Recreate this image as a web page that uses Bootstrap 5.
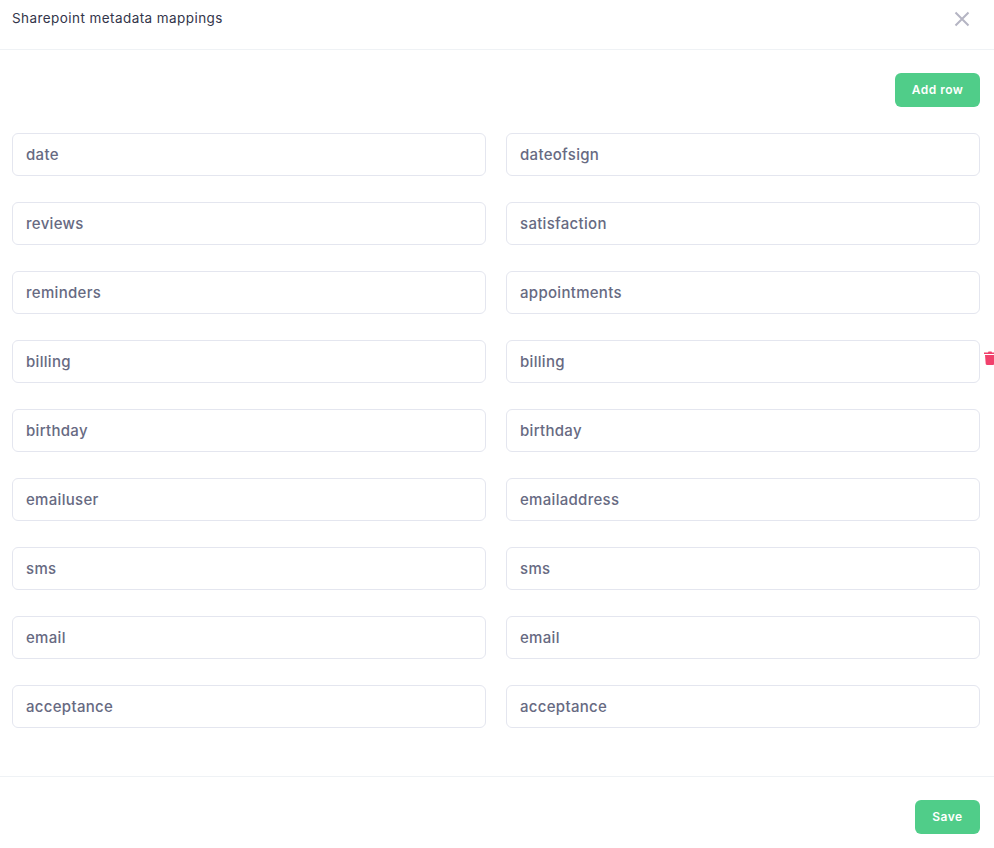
<!DOCTYPE html>
<html>
  <head>
    <link href="https://cdn.jsdelivr.net/npm/bootstrap@5.3.3/dist/css/bootstrap.min.css" rel="stylesheet">
    <script src="https://cdn.jsdelivr.net/npm/bootstrap@5.3.3/dist/js/bootstrap.bundle.min.js"></script>
    <style>
      html, body { height: 100%; overflow: hidden; }
      body { font-family: "Inter", "Liberation Sans", sans-serif; background: #fff; }
      .dlg-head { height: 50px; padding: 0 12px; border-bottom: 1px solid #eff2f5; }
      .dlg-title { font-size: 13.5px; letter-spacing: .43px; line-height: 18px; color: #33354a; margin: 9px 0 0; font-weight: 400; }
      .dlg-close { width: 16px; height: 16px; margin: 11px 12px 0 0; color: #b5b5c3; }
      .dlg-body { padding: 23px 14px 0 12px; }
      .map-btn { background: #50cd89; border: 0; color: #fff; font-size: 12px; letter-spacing: .5px; font-weight: 600; border-radius: 6px; height: 34px; }
      .map-btn:hover { background: #47be7d; color: #fff; }
      .add-btn { width: 85px; }
      .save-btn { width: 65px; }
      .map-list { display: flex; flex-direction: column; gap: 26px; margin-top: 26px; }
      .map-row { display: grid; grid-template-columns: 474px 474px; column-gap: 20px; position: relative; }
      .map-input.form-control { height: 43px; padding: 0 13px; font-size: 15px; letter-spacing: .3px; font-weight: 500; color: #676a82; border: 1px solid #e4e6ef; border-radius: 6px; }
      .trash-btn { position: absolute; left: 972px; top: 11px; width: 12px; height: 14px; color: #f1416c; }
      .dlg-foot { margin-top: 48px; padding: 23px 14px 0 12px; border-top: 1px solid #eff2f5; }
    </style>
  </head>
  <body>
    <div class="dlg-head d-flex justify-content-between align-items-start">
      <h5 class="dlg-title">Sharepoint metadata mappings</h5>
      <svg class="dlg-close" viewBox="0 0 16 16" fill="none" stroke="currentColor" stroke-width="2"><path d="M1.5 1.5l13 13M14.5 1.5l-13 13"/></svg>
    </div>

    <div class="dlg-body">
      <div class="d-flex justify-content-end">
        <button class="btn map-btn add-btn p-0">Add row</button>
      </div>
      <div class="map-list" id="mapList"></div>
    </div>

    <div class="dlg-foot d-flex justify-content-end">
      <button class="btn map-btn save-btn p-0">Save</button>
    </div>

    <script>
      const rows = [
        ['date', 'dateofsign'],
        ['reviews', 'satisfaction'],
        ['reminders', 'appointments'],
        ['billing', 'billing'],
        ['birthday', 'birthday'],
        ['emailuser', 'emailaddress'],
        ['sms', 'sms'],
        ['email', 'email'],
        ['acceptance', 'acceptance']
      ];
      // trash icon only shows on the hovered row (billing), cut off by the window edge
      const trash = '<svg class="trash-btn" viewBox="0 0 12 14" fill="currentColor"><path d="M0 1.6h4l.5-1h3l.5 1h4V3H0z"/><path d="M1 4h10l-.7 8.8c0 .7-.5 1.2-1.2 1.2H2.9c-.7 0-1.2-.5-1.2-1.2z"/></svg>';
      const list = document.getElementById('mapList');
      rows.forEach(function (r, i) {
        const row = document.createElement('div');
        row.className = 'map-row';
        row.innerHTML = '<input class="form-control map-input" value="' + r[0] + '">' +
          '<input class="form-control map-input" value="' + r[1] + '">' + (i === 3 ? trash : '');
        list.appendChild(row);
      });
    </script>
  </body>
</html>
